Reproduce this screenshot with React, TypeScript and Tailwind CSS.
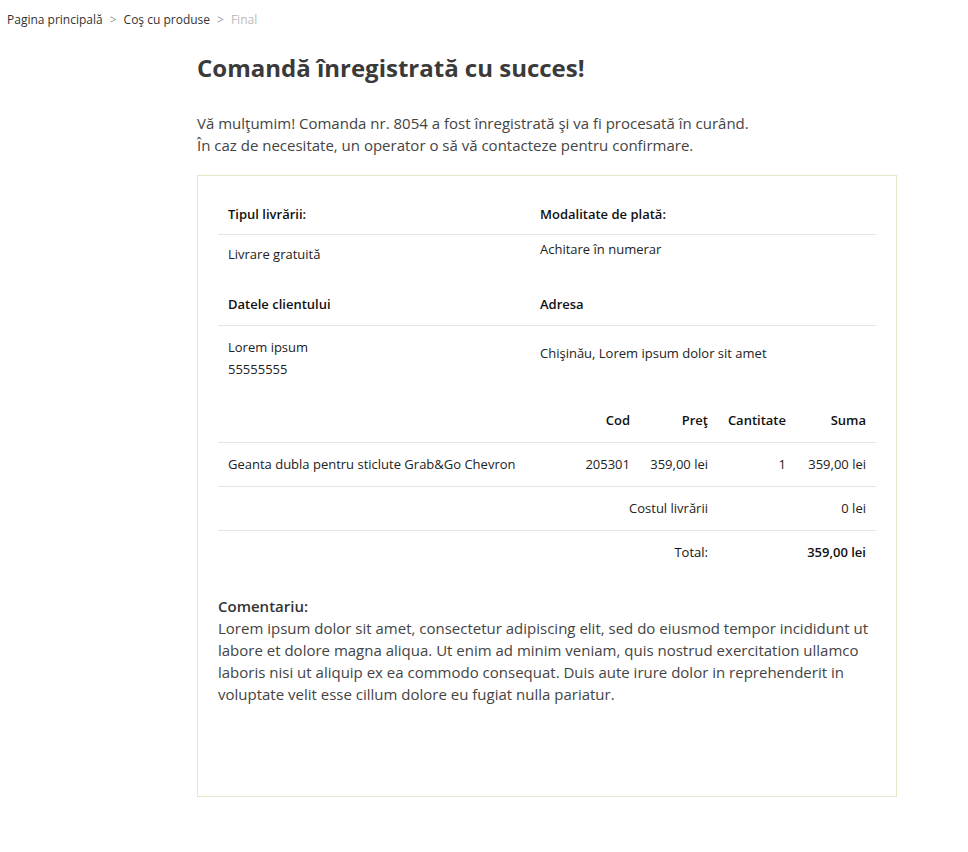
import React from "react";

const font = { fontFamily: '"Open Sans", "Noto Sans", sans-serif' };

export default function App() {
  return (
    <div className="min-h-[852px] bg-white text-[#333]" style={font}>
      <div className="flex items-center pl-[7px] pt-[11px] text-[12px] leading-[18px]">
        <span className="text-[#333]">Pagina principală</span>
        <span className="px-[7px] text-[#999]">&gt;</span>
        <span className="text-[#333]">Coş cu produse</span>
        <span className="px-[7px] text-[#999]">&gt;</span>
        <span className="text-[#bbb]">Final</span>
      </div>

      <div className="ml-[197px] w-[700px]">
        <h1 className="mt-[23px] text-[24px] font-bold leading-[32px] text-[#3a3a3a]">
          Comandă înregistrată cu succes!
        </h1>
        <p className="mt-[28px] text-[15px] leading-[22px] text-[#444]">
          Vă mulţumim! Comanda nr. 8054 a fost înregistrată şi va fi procesată în curând.
          <br />
          În caz de necesitate, un operator o să vă contacteze pentru confirmare.
        </p>

        <div className="mt-[19px] h-[622px] border border-[#e6e7c6] px-[20px] pt-[20px] text-[13px] text-[#222]">
          <div className="grid grid-cols-[312px_1fr]">
            <div className="flex h-[39px] items-center border-b border-[#e1e5ee] pl-[10px] font-semibold text-[#111]">
              Tipul livrării:
            </div>
            <div className="flex h-[39px] items-center border-b border-[#e1e5ee] pl-[10px] font-semibold text-[#111]">
              Modalitate de plată:
            </div>
            <div className="h-[49px] pl-[10px] pt-[10px] leading-[18px]">Livrare gratuită</div>
            <div className="h-[49px] pl-[10px] pt-[5px] leading-[18px]">Achitare în numerar</div>
            <div className="h-[42px] border-b border-[#e1e5ee] pl-[10px] pt-[11px] font-semibold leading-[18px] text-[#111]">
              Datele clientului
            </div>
            <div className="h-[42px] border-b border-[#e1e5ee] pl-[10px] pt-[11px] font-semibold leading-[18px] text-[#111]">
              Adresa
            </div>
            <div className="h-[64px] pl-[10px] pt-[10px] leading-[22px]">
              <div>Lorem ipsum</div>
              <div>55555555</div>
            </div>
            <div className="h-[64px] pl-[10px] pt-[16px] leading-[22px]">
              Chişinău, Lorem ipsum dolor sit amet
            </div>
          </div>

          <div className="mt-[9px] grid grid-cols-[357px_65px_78px_78px_80px]">
            <div className="h-[44px] border-b border-[#e1e5ee]" />
            <div className="flex h-[44px] items-center justify-end border-b border-[#e1e5ee] pr-[10px] font-semibold text-[#111]">
              Cod
            </div>
            <div className="flex h-[44px] items-center justify-end border-b border-[#e1e5ee] pr-[10px] font-semibold text-[#111]">
              Preţ
            </div>
            <div className="flex h-[44px] items-center justify-end border-b border-[#e1e5ee] pr-[10px] font-semibold text-[#111]">
              Cantitate
            </div>
            <div className="flex h-[44px] items-center justify-end border-b border-[#e1e5ee] pr-[10px] font-semibold text-[#111]">
              Suma
            </div>

            <div className="flex h-[44px] items-center border-b border-[#e1e5ee] pl-[10px]">
              Geanta dubla pentru sticlute Grab&amp;Go Chevron
            </div>
            <div className="flex h-[44px] items-center justify-end border-b border-[#e1e5ee] pr-[10px]">
              205301
            </div>
            <div className="flex h-[44px] items-center justify-end border-b border-[#e1e5ee] pr-[10px]">
              359,00 lei
            </div>
            <div className="flex h-[44px] items-center justify-end border-b border-[#e1e5ee] pr-[10px]">
              1
            </div>
            <div className="flex h-[44px] items-center justify-end border-b border-[#e1e5ee] pr-[10px]">
              359,00 lei
            </div>

            <div className="col-span-3 flex h-[44px] items-center justify-end border-b border-[#e1e5ee] pr-[10px]">
              Costul livrării
            </div>
            <div className="h-[44px] border-b border-[#e1e5ee]" />
            <div className="flex h-[44px] items-center justify-end border-b border-[#e1e5ee] pr-[10px]">
              0 lei
            </div>

            <div className="col-span-3 flex h-[44px] items-center justify-end pr-[10px] text-[#111]">
              Total:
            </div>
            <div className="h-[44px]" />
            <div className="flex h-[44px] items-center justify-end pr-[10px] font-semibold text-[#111]">
              359,00 lei
            </div>
          </div>

          <div className="mt-[20px] text-[15px] leading-[22px] text-[#444]">
            <div className="font-semibold text-[#333]">Comentariu:</div>
            <p>
              Lorem ipsum dolor sit amet, consectetur adipiscing elit, sed do eiusmod tempor incididunt ut
              labore et dolore magna aliqua. Ut enim ad minim veniam, quis nostrud exercitation ullamco
              laboris nisi ut aliquip ex ea commodo consequat. Duis aute irure dolor in reprehenderit in
              voluptate velit esse cillum dolore eu fugiat nulla pariatur.
            </p>
          </div>
        </div>
      </div>
    </div>
  );
}
